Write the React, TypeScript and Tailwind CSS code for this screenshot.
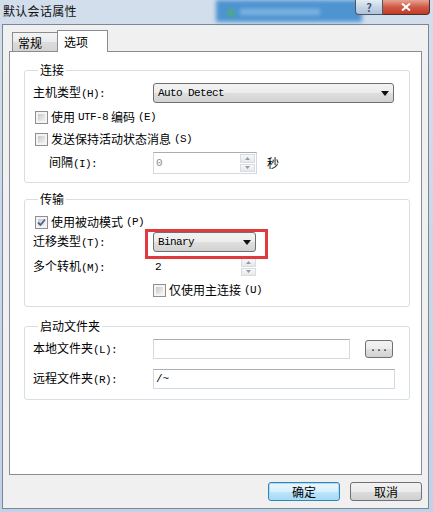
import React from 'react';

// half-width runs are rendered like SimSun's 6px latin glyphs
function Txt({ s }: { s: string }) {
  const parts = s.split(/([\x20-\x7e]+)/).filter(Boolean);
  return (
    <>
      {parts.map((p, i) =>
        /^[\x20-\x7e]+$/.test(p) ? (
          <span key={i} className="font-['Liberation_Mono',monospace] text-[11px] tracking-[-0.6px]">
            {p}
          </span>
        ) : (
          <span key={i}>{p}</span>
        )
      )}
    </>
  );
}

function Check({ checked }: { checked?: boolean }) {
  return (
    <span className="w-[13px] h-[13px] border border-[#8f8f8f] bg-[#f4f4f4] p-[2px] flex shrink-0 relative">
      <span className="flex-1 bg-gradient-to-br from-[#c9c9c9] to-[#f3f3f3]" />
      {checked && (
        <svg className="absolute left-[1px] top-[1px]" width="9" height="9" viewBox="0 0 9 9">
          <path d="M1 4.5 L3.5 7 L8 1.5" fill="none" stroke="#4c6290" strokeWidth="1.8" />
        </svg>
      )}
    </span>
  );
}

function Combo({ value, className }: { value: string; className: string }) {
  return (
    <div
      className={`h-[20px] border border-[#707070] rounded-[3px] bg-[linear-gradient(#f3f3f3,#ececec_50%,#dfdfdf_50%,#d2d2d2)] flex items-center pl-[4px] pr-[4px] ${className}`}
    >
      <span className="flex-1 font-['Liberation_Mono',monospace] text-[11px] tracking-[-0.6px] text-black">{value}</span>
      <svg width="8" height="5" viewBox="0 0 8 5">
        <path d="M0 0 H8 L4 5 Z" fill="#111" />
      </svg>
    </div>
  );
}

function Arrow({ up }: { up?: boolean }) {
  return (
    <svg width="5" height="3" viewBox="0 0 5 3">
      <path d={up ? 'M0 3 L2.5 0 L5 3 Z' : 'M0 0 L5 0 L2.5 3 Z'} fill="#8a9bb3" />
    </svg>
  );
}

function Spin({ value, disabled }: { value: string; disabled?: boolean }) {
  return (
    <div className="w-[104px] h-[22px] border border-[#d5d8de] border-t-[#abadb3] bg-white flex">
      <span
        className={`flex-1 pl-[2px] leading-[20px] font-['Liberation_Mono',monospace] text-[11px] ${
          disabled ? 'text-[#8d8d8d]' : 'text-black'
        }`}
      >
        {value}
      </span>
      <div className="w-[16px] flex flex-col gap-[1px] py-[1px] pr-[1px]">
        <div className="flex-1 border border-[#d9dde3] bg-[linear-gradient(#f7f7f7,#e8e8e8)] flex items-center justify-center">
          <Arrow up />
        </div>
        <div className="flex-1 border border-[#d9dde3] bg-[linear-gradient(#f7f7f7,#e8e8e8)] flex items-center justify-center">
          <Arrow />
        </div>
      </div>
    </div>
  );
}

function Label({ s, className = 'w-[120px]' }: { s: string; className?: string }) {
  return (
    <span className={`shrink-0 ${className}`}>
      <Txt s={s} />
    </span>
  );
}

export default function App() {
  return (
    <div className="w-[433px] h-[512px] overflow-hidden relative bg-[linear-gradient(#d2deeb,#bfd2e8)] font-['Noto_Sans_CJK_SC','Liberation_Sans',sans-serif] text-[12px] text-black">
      {/* title bar */}
      <div className="h-[24px] flex relative">
        {/* blurred window behind the aero glass */}
        <div className="absolute left-[216px] top-0 w-[146px] h-[22px] bg-[#3f8ccf] blur-[2px] opacity-90">
          <div className="absolute left-[12px] top-[10px] w-[6px] h-[6px] bg-[#3fae55]" />
          <div className="absolute left-[24px] top-[9px] w-[80px] h-[6px] bg-[#8fc0ea] opacity-70" />
        </div>
        <span className="relative pl-[3px] pt-[2px] text-[12px] tracking-[0.3px] text-[#111]">默认会话属性</span>
        <div className="relative ml-auto mr-[3px] flex self-start">
          <div className="w-[28px] h-[15px] border border-[#4a5566] border-t-0 rounded-bl-[4px] bg-[linear-gradient(#e6edf5,#c6d5e6_50%,#afc3da)] flex items-center justify-center text-[11px] leading-none font-bold text-[#4b5a6e]">
            ?
          </div>
          <div className="w-[47px] h-[15px] border border-[#4a3030] border-t-0 border-l-0 rounded-br-[4px] bg-[linear-gradient(#e8a393,#cf5a44_50%,#c23b27)] flex items-center justify-center">
            <svg width="10" height="8" viewBox="0 0 10 8">
              <path d="M1 0.5 L9 7.5 M9 0.5 L1 7.5" stroke="#fff" strokeWidth="2" />
            </svg>
          </div>
        </div>
      </div>

      {/* client area */}
      <div className="ml-[2px] w-[427px] h-[485px] border border-[#7c8796] bg-[#f0f0f0] flex flex-col">
        {/* tabs */}
        <div className="h-[26px] flex items-end pl-[9px] shrink-0">
          <div className="w-[46px] h-[19px] border border-[#898c95] border-b-0 bg-[linear-gradient(#f3f3f3,#ebebeb_50%,#dcdcdc_50%,#d4d4d4)] flex items-center pl-[5px] pt-[1px]">
            常规
          </div>
          <div className="relative z-10 w-[51px] h-[22px] -mb-[1px] -ml-[1px] border border-[#898c95] border-b-0 bg-white flex items-start pl-[6px] pt-[2px]">
            选项
          </div>
        </div>

        {/* tab panel */}
        <div className="ml-[6px] w-[413px] h-[424px] border border-[#898c95] bg-white pl-[14px] pr-[11px] shrink-0">
          <fieldset className="mt-[11px] border border-[#d5dfe5] rounded-[3px] pl-[8px] pt-[6px] pb-[8px]">
            <legend className="ml-[5px] px-[2px] leading-[14px]">连接</legend>
            <div className="h-[20px] flex items-center">
              <Label s="主机类型(H):" />
              <Combo value="Auto Detect" className="w-[241px]" />
            </div>
            <div className="mt-[3px] h-[22px] flex items-center pl-[2px] gap-[3px]">
              <Check />
              <Txt s="使用UTF-8编码(E)" />
            </div>
            <div className="h-[22px] flex items-center pl-[2px] gap-[3px]">
              <Check />
              <Txt s="发送保持活动状态消息(S)" />
            </div>
            <div className="mt-[2px] h-[22px] flex items-center">
              <Label s="间隔(I):" className="w-[120px] pl-[16px]" />
              <Spin value="0" disabled />
              <span className="ml-[10px]">秒</span>
            </div>
          </fieldset>

          <fieldset className="mt-[9px] border border-[#d5dfe5] rounded-[3px] pl-[8px] pt-[6px] pb-[6px]">
            <legend className="ml-[5px] px-[2px] leading-[14px]">传输</legend>
            <div className="h-[20px] flex items-center pl-[2px] gap-[3px]">
              <Check checked />
              <Txt s="使用被动模式(P)" />
            </div>
            <div className="h-[20px] flex items-center">
              <Label s="迁移类型(T):" />
              <div className="relative">
                <Combo value="Binary" className="w-[103px]" />
                {/* annotation box */}
                <div className="absolute -left-[8px] -top-[3px] w-[123px] h-[30px] border-[3px] border-[#df3b3f]" />
              </div>
            </div>
            <div className="mt-[5px] h-[20px] flex items-center">
              <Label s="多个转机(M):" />
              <div className="h-[20px] flex items-center">
                <div className="w-[104px] h-[20px] bg-white flex">
                  <span className="flex-1 pl-[2px] leading-[20px] font-['Liberation_Mono',monospace] text-[11px]">2</span>
                  <div className="w-[16px] flex flex-col gap-[1px] py-[1px] pr-[1px]">
                    <div className="flex-1 border border-[#d9dde3] bg-[linear-gradient(#f7f7f7,#e8e8e8)] flex items-center justify-center">
                      <Arrow up />
                    </div>
                    <div className="flex-1 border border-[#d9dde3] bg-[linear-gradient(#f7f7f7,#e8e8e8)] flex items-center justify-center">
                      <Arrow />
                    </div>
                  </div>
                </div>
              </div>
            </div>
            <div className="mt-[3px] h-[20px] flex items-center pl-[120px] gap-[3px]">
              <Check />
              <Txt s="仅使用主连接(U)" />
            </div>
          </fieldset>

          <fieldset className="mt-[12px] border border-[#d5dfe5] rounded-[3px] pl-[8px] pt-[6px] pb-[10px]">
            <legend className="ml-[5px] px-[2px] leading-[14px]">启动文件夹</legend>
            <div className="h-[20px] flex items-center">
              <Label s="本地文件夹(L):" />
              <div className="w-[197px] h-[20px] border border-[#d5d8de] border-t-[#abadb3] bg-white" />
              <div className="ml-[15px] w-[28px] h-[18px] border border-[#707070] rounded-[3px] bg-[linear-gradient(#f3f3f3,#ececec_50%,#dfdfdf_50%,#d2d2d2)] flex items-center justify-center font-['Liberation_Mono',monospace] text-[10px] leading-none">
                ...
              </div>
            </div>
            <div className="mt-[10px] h-[20px] flex items-center">
              <Label s="远程文件夹(R):" />
              <div className="w-[242px] h-[20px] border border-[#d5d8de] border-t-[#abadb3] bg-white pl-[2px] leading-[18px] font-['Liberation_Mono',monospace] text-[11px]">
                /~
              </div>
            </div>
          </fieldset>
        </div>

        {/* dialog buttons */}
        <div className="mt-[7px] flex justify-end gap-[10px] pr-[6px]">
          <button className="w-[72px] h-[19px] border border-[#3c7fb1] rounded-[3px] bg-[linear-gradient(#eaf6fd,#d9f0fc_50%,#bee6fd_50%,#a7d9f5)] shadow-[inset_0_0_0_1px_#9fe2f8] flex items-center justify-center leading-none">
            确定
          </button>
          <button className="w-[72px] h-[19px] border border-[#707070] rounded-[3px] bg-[linear-gradient(#f2f2f2,#ebebeb_50%,#dddddd_50%,#cfcfcf)] flex items-center justify-center leading-none">
            取消
          </button>
        </div>
      </div>
    </div>
  );
}
